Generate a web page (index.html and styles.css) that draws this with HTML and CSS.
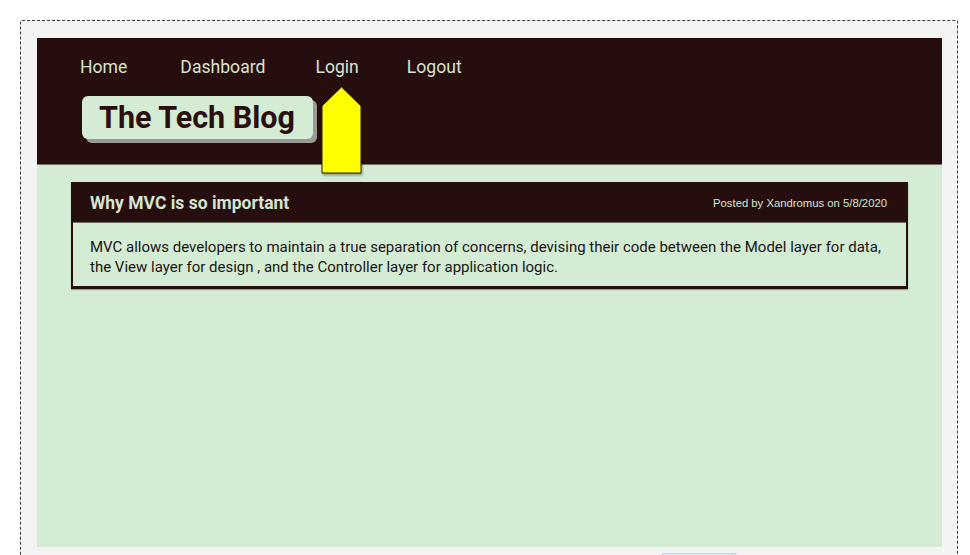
FILE: index.html
```html
<!DOCTYPE html>
<html lang="en">
<head>
<meta charset="utf-8">
<title>The Tech Blog</title>
<link rel="stylesheet" href="styles.css">
</head>
<body>
<div class="frame">
  <header class="site-header">
    <nav class="nav">
      <a class="nav-link nav-home" href="#">Home</a>
      <a class="nav-link nav-dash" href="#">Dashboard</a>
      <a class="nav-link nav-login" href="#">Login</a>
      <a class="nav-link" href="#">Logout</a>
    </nav>
    <h1 class="brand">The Tech Blog</h1>
    <svg class="pointer" width="41" height="90" viewBox="0 0 41 90" aria-hidden="true">
      <polygon points="20.5,1 40,20 40,87 1,87 1,20" fill="#ffff00" stroke="#2a1a10" stroke-width="1"/>
    </svg>
  </header>
  <main class="content">
    <article class="post">
      <div class="post-head">
        <h2 class="post-title">Why MVC is so important</h2>
        <span class="post-meta">Posted by Xandromus on 5/8/2020</span>
      </div>
      <p class="post-body">MVC allows developers to maintain a true separation of concerns, devising their code between the Model layer for data, the View layer for design , and the Controller layer for application logic.</p>
    </article>
  </main>
  <div class="footer-row">
    <span class="footer-tab"></span>
  </div>
</div>
</body>
</html>
```
FILE: styles.css
```css
* { box-sizing: border-box; }
html, body {
  margin: 0;
  padding: 0;
  background: #ffffff;
  overflow: hidden;
}
body {
  font-family: Roboto, "Noto Sans", sans-serif;
}
.frame {
  margin: 20px 0 0 20px;
  width: 938px;
  border: 1px dashed #3a3a3a;
  border-radius: 2px;
  background: #f4f4f4;
  padding: 17px 15px 0 16px;
  height: 600px;
}
.site-header {
  position: relative;
  background: #260e0e;
  padding: 19px 0 25px 43px;
  border-bottom: 1px solid #7a7468;
}
.nav {
  display: flex;
  align-items: center;
}
.nav-link {
  color: #d5e4d1;
  text-decoration: none;
  font-size: 17.6px;
  line-height: 20px;
}
.nav-home { margin-right: 53px; }
.nav-dash { margin-right: 50px; }
.nav-login { margin-right: 48px; }
.brand {
  display: inline-block;
  margin: 19px 0 0 2px;
  height: 43px;
  padding: 1px 18px 0 17px;
  background: #d3ecd3;
  border-radius: 6px;
  box-shadow: 4px 4px 0 #9b9898;
  color: #2a0f11;
  font-size: 30.5px;
  font-weight: 700;
  line-height: 42px;
}
.pointer {
  position: absolute;
  left: 284px;
  top: 48px;
  z-index: 2;
  filter: drop-shadow(1px 2px 1px rgba(0,0,0,0.35));
}
.content {
  background: #d3ecd3;
  height: 382px;
  padding: 17px 34px 0 34px;
}
.post {
  border: 2px solid #260e0e;
  border-bottom-width: 3px;
  box-shadow: 0 1px 1px rgba(0,0,0,0.3);
}
.post-head {
  display: flex;
  align-items: center;
  justify-content: space-between;
  background: #260e0e;
  height: 39px;
  padding: 0 19px 0 17px;
  border-bottom: 1px solid #6f6f62;
}
.post-title {
  margin: 0;
  color: #d5e4d1;
  font-size: 17.5px;
  font-weight: 700;
}
.post-meta {
  color: #d5e4d1;
  font-family: "Liberation Sans", Arial, sans-serif;
  font-size: 11.3px;
}
.post-body {
  margin: 0;
  background: #d3ecd3;
  color: #1c1414;
  font-size: 15px;
  line-height: 20px;
  padding: 14px 17px 9px 17px;
}
.footer-row {
  padding: 6px 0 0 624px;
}
.footer-tab {
  display: block;
  width: 76px;
  height: 14px;
  background: #dde8f5;
  border: 1px solid #c4d2e6;
  border-radius: 3px 3px 0 0;
}
```
